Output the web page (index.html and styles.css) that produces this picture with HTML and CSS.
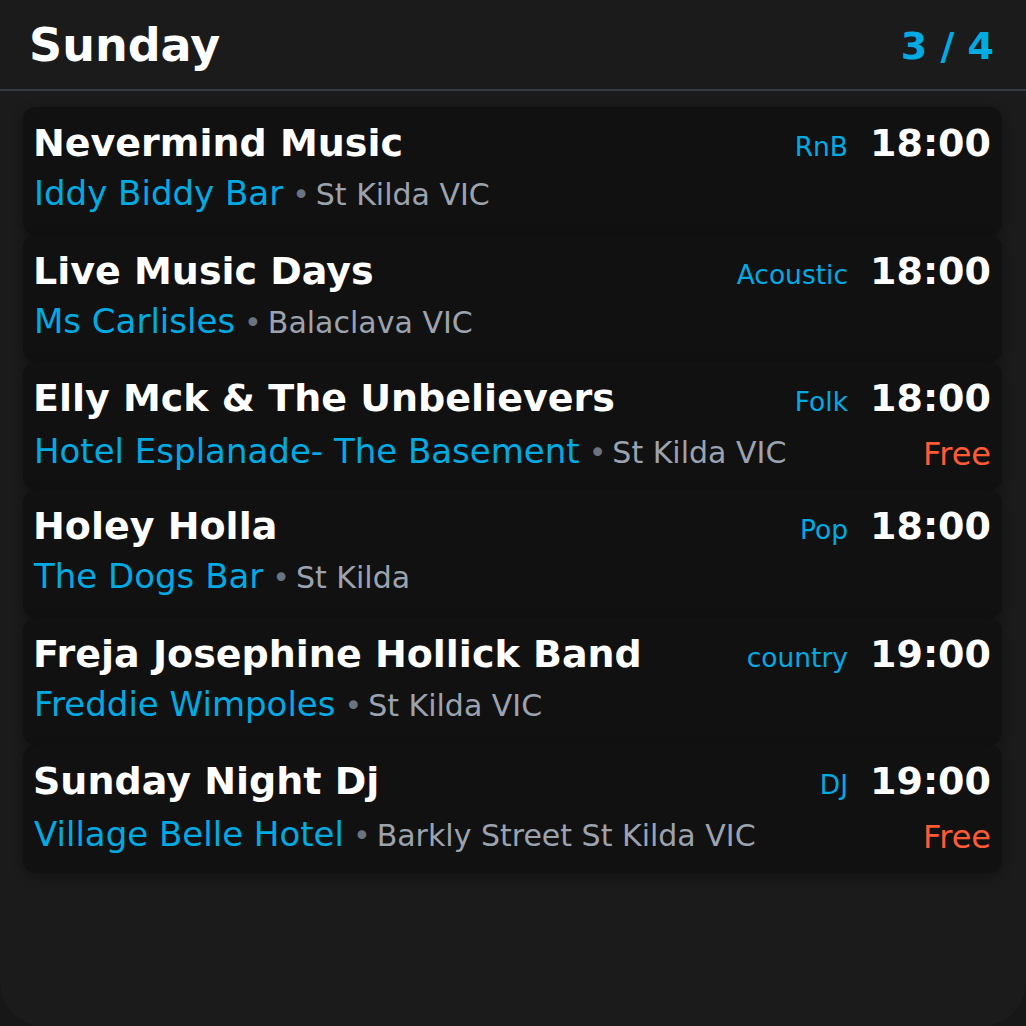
FILE: index.html
```html
<!DOCTYPE html>
<html>
<head>
<meta charset="utf-8">
<link rel="stylesheet" href="styles.css">
</head>
<body>
<div class="screen">
  <header class="header">
    <h1 class="day">Sunday</h1>
    <div class="page">3 / 4</div>
  </header>
  <div class="list">
    <div class="card">
      <div class="row1"><span class="title">Nevermind Music</span><span class="genre">RnB</span><span class="time">18:00</span></div>
      <div class="row2"><span class="where"><span class="venue">Iddy Biddy Bar</span><span class="dot">•</span><span class="loc">St Kilda VIC</span></span></div>
    </div>
    <div class="card">
      <div class="row1"><span class="title">Live Music Days</span><span class="genre">Acoustic</span><span class="time">18:00</span></div>
      <div class="row2"><span class="where"><span class="venue">Ms Carlisles</span><span class="dot">•</span><span class="loc">Balaclava VIC</span></span></div>
    </div>
    <div class="card">
      <div class="row1"><span class="title">Elly Mck &amp; The Unbelievers</span><span class="genre">Folk</span><span class="time">18:00</span></div>
      <div class="row2"><span class="where"><span class="venue">Hotel Esplanade- The Basement</span><span class="dot">•</span><span class="loc">St Kilda VIC</span></span><span class="free">Free</span></div>
    </div>
    <div class="card">
      <div class="row1"><span class="title">Holey Holla</span><span class="genre">Pop</span><span class="time">18:00</span></div>
      <div class="row2"><span class="where"><span class="venue">The Dogs Bar</span><span class="dot">•</span><span class="loc">St Kilda</span></span></div>
    </div>
    <div class="card">
      <div class="row1"><span class="title">Freja Josephine Hollick Band</span><span class="genre">country</span><span class="time">19:00</span></div>
      <div class="row2"><span class="where"><span class="venue">Freddie Wimpoles</span><span class="dot">•</span><span class="loc">St Kilda VIC</span></span></div>
    </div>
    <div class="card">
      <div class="row1"><span class="title">Sunday Night Dj</span><span class="genre">DJ</span><span class="time">19:00</span></div>
      <div class="row2"><span class="where"><span class="venue">Village Belle Hotel</span><span class="dot">•</span><span class="loc">Barkly Street St Kilda VIC</span></span><span class="free">Free</span></div>
    </div>
  </div>
</div>
</body>
</html>
```

FILE: styles.css
```css
html, body {
  margin: 0;
  padding: 0;
  background: #171717;
}
body {
  font-family: "DejaVu Sans", sans-serif;
  color: #fff;
}
.screen {
  width: 1026px;
  height: 1026px;
  background: #1b1b1b;
  border-radius: 0 0 44px 44px;
  overflow: hidden;
}
.header {
  display: flex;
  align-items: center;
  justify-content: space-between;
  padding: 19px 32px 17px 29px;
  border-bottom: 2px solid #363b45;
}
.day {
  margin: 0;
  font-size: 46px;
  font-weight: bold;
  line-height: 53px;
}
.page {
  font-size: 38px;
  font-weight: bold;
  color: #00abe3;
}
.list {
  margin: 16px 24px 0 23px;
  height: 766px;
  display: flex;
  flex-direction: column;
}
.card {
  flex: 1;
  background: #111111;
  border-radius: 13px;
  box-shadow: 0 3px 12px rgba(0, 0, 0, 0.35);
  padding: 14px 11px 0 11px;
  box-sizing: border-box;
}
.row1 {
  display: flex;
  align-items: baseline;
}
.title {
  flex: 1;
  font-size: 38px;
  font-weight: bold;
  white-space: nowrap;
  margin-left: -1px;
}
.genre {
  font-size: 26.5px;
  color: #00abe3;
  margin-right: 22px;
}
.time {
  font-size: 38px;
  font-weight: bold;
}
.row2 {
  display: flex;
  align-items: center;
  justify-content: space-between;
  margin-top: 8px;
}
.where {
  white-space: nowrap;
}
.venue {
  font-size: 34px;
  color: #00abe3;
}
.dot {
  font-size: 30px;
  color: #6b7280;
  margin: 0 6px 0 9px;
}
.loc {
  font-size: 30px;
  color: #9ca3af;
}
.free {
  font-size: 32px;
  color: #ff5a36;
  padding-top: 7px;
}
```
